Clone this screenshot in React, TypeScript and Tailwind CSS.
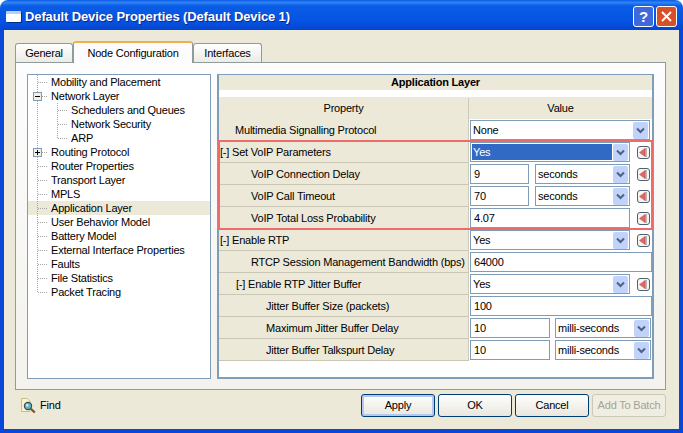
import React from "react";

const FONT = "font-['Liberation_Sans','Noto_Sans',sans-serif]";

type TreeItem = { label: string; depth: number; box?: "+" | "-"; last?: boolean; selected?: boolean };

const treeItems: TreeItem[] = [
  { label: "Mobility and Placement", depth: 0 },
  { label: "Network Layer", depth: 0, box: "-" },
  { label: "Schedulers and Queues", depth: 1 },
  { label: "Network Security", depth: 1 },
  { label: "ARP", depth: 1, last: true },
  { label: "Routing Protocol", depth: 0, box: "+" },
  { label: "Router Properties", depth: 0 },
  { label: "Transport Layer", depth: 0 },
  { label: "MPLS", depth: 0 },
  { label: "Application Layer", depth: 0, selected: true },
  { label: "User Behavior Model", depth: 0 },
  { label: "Battery Model", depth: 0 },
  { label: "External Interface Properties", depth: 0 },
  { label: "Faults", depth: 0 },
  { label: "File Statistics", depth: 0 },
  { label: "Packet Tracing", depth: 0, last: true },
];

const TreeRow = ({ item }: { item: TreeItem }) => (
  <div className={`flex h-[14px] items-center ${item.selected ? "bg-[#ece9d8]" : ""}`}>
    <svg width={item.depth ? 43 : 23} height="14" className="shrink-0">
      <g stroke="#a5a5a5" strokeDasharray="1 1" fill="none">
        <line x1="9.5" y1="0" x2="9.5" y2={item.depth === 0 && item.last ? 7 : 14} />
        {item.depth === 0 && <line x1="10" y1="7.5" x2="20" y2="7.5" />}
        {item.depth === 1 && <line x1="29.5" y1="0" x2="29.5" y2={item.last ? 7 : 14} />}
        {item.depth === 1 && <line x1="30" y1="7.5" x2="40" y2="7.5" />}
      </g>
      {item.box && (
        <g>
          <rect x="5.5" y="3.5" width="8" height="8" fill="#f1efe6" stroke="#7f9db9" />
          <line x1="7" y1="7.5" x2="12" y2="7.5" stroke="#000" />
          {item.box === "+" && <line x1="9.5" y1="5" x2="9.5" y2="10" stroke="#000" />}
        </g>
      )}
    </svg>
    <span className="whitespace-nowrap">{item.label}</span>
  </div>
);

const Chevron = () => (
  <span className="flex h-[17px] w-[15px] shrink-0 items-center justify-center rounded-[2px] bg-[#c1d3fb]">
    <svg width="9" height="7" viewBox="0 0 9 7">
      <path d="M1 1.5 L4.5 5 L8 1.5" stroke="#4d6185" strokeWidth="2" fill="none" />
    </svg>
  </span>
);

const Select = ({ value, width, active }: { value: string; width: string; active?: boolean }) => (
  <div className={`flex h-5 items-center border border-[#7f9db9] bg-white p-px ${width}`}>
    <span className={`flex h-full flex-1 items-center pl-px ${active ? "bg-[#316ac5] text-white" : ""}`}>{value}</span>
    <span className="ml-px">
      <Chevron />
    </span>
  </div>
);

const Input = ({ value, width }: { value: string; width: string }) => (
  <div className={`flex h-5 items-center border border-[#7f9db9] bg-white pl-[3px] ${width}`}>{value}</div>
);

const ParamButton = () => (
  <span className="ml-[7px] flex h-[13px] w-[13px] shrink-0 items-center justify-center rounded-[3px] border border-[#4f6070] bg-[#f6f5ef]">
    <svg width="9" height="9" viewBox="0 0 9 9">
      <rect x="6" y="0" width="2" height="9" fill="#b9b7ab" />
      <path d="M0.5 4.5 L6 0.5 V8.5 Z" fill="#e0686c" stroke="#b5494d" strokeWidth="0.5" />
    </svg>
  </span>
);

const Row = ({
  label,
  indent,
  children,
}: {
  label: string;
  indent: string;
  children: React.ReactNode;
}) => (
  <div className="flex h-[22px]">
    <div className={`flex w-[250px] items-center border-r border-b border-r-[#cdcab9] border-b-[#c9c6b5] bg-[#ece9d8] pt-px ${indent}`}>
      <span className="whitespace-nowrap">{label}</span>
    </div>
    <div className="flex flex-1 items-center pl-px">{children}</div>
  </div>
);

const FooterButton = ({ label, primary, disabled }: { label: string; primary?: boolean; disabled?: boolean }) => (
  <button
    className={`flex h-[23px] w-[74px] items-center justify-center rounded-[3px] border ${
      disabled
        ? "border-[#cbc8b8] bg-[#f0eee2] text-[#a5a294]"
        : `border-[#003c74] bg-gradient-to-b from-[#fefefd] to-[#e9e7dd] text-black ${primary ? "shadow-[inset_0_0_0_2px_#b4c9ef]" : ""}`
    }`}
  >
    {label}
  </button>
);

const FindIcon = () => (
  <svg width="17" height="17" viewBox="0 0 17 17">
    <path d="M1.5 1.5 H7.5 L10 4 V14.5 H1.5 Z" fill="#fdf3c8" stroke="#c9bd90" />
    <circle cx="8" cy="9" r="3.6" fill="#5fb6c4" stroke="#3c4a5c" strokeWidth="1.2" />
    <circle cx="7.2" cy="8.2" r="1.2" fill="#d7f1f4" />
    <path d="M10.8 11.8 L14.8 15.5" stroke="#8a4a1c" strokeWidth="2.2" />
  </svg>
);

const Tab = ({ label, className }: { label: string; className: string }) => (
  <div className={`flex items-center justify-center rounded-t-[3px] border border-[#919b9c] ${className}`}>{label}</div>
);

export default function App() {
  return (
    <div className={`flex h-[433px] w-[683px] flex-col overflow-hidden rounded-t-[8px] bg-white text-[11px] leading-none tracking-[-0.2px] text-black ${FONT}`}>
      {/* title bar */}
      <div className="flex h-[30px] shrink-0 items-center bg-[linear-gradient(to_bottom,#0a5ae6_0%,#2f84f5_8%,#0a5ce6_20%,#0553e2_70%,#0445d0_100%)] pl-[6px] pr-[6px] pt-[3px]">
        <span className="h-[11px] w-[15px] rounded-[1px] border-t-[3px] border-[#b9d0f5] bg-white shadow-[1px_1px_0_#0a2a8a]" />
        <span className="ml-[4px] flex-1 whitespace-nowrap text-[13px] font-bold tracking-[-0.12px] text-white [text-shadow:1px_1px_0_#0a2a8a]">
          Default Device Properties (Default Device 1)
        </span>
        <span className="flex h-[21px] w-[21px] items-center justify-center rounded-[3px] border border-white bg-[#3e68dc] text-[15px] font-bold text-white">?</span>
        <span className="ml-[2px] flex h-[21px] w-[21px] items-center justify-center rounded-[3px] border border-white bg-[#d8502a]">
          <svg width="11" height="11" viewBox="0 0 11 11">
            <path d="M1 1 L10 10 M10 1 L1 10" stroke="#fff" strokeWidth="2" />
          </svg>
        </span>
      </div>

      {/* window body */}
      <div className="flex flex-1 flex-col border-x-[4px] border-b-[4px] border-[#0a46d8] bg-[#ece9d8] pl-[11px] pr-[13px] pt-[10px]">
        <div className="flex h-[22px] items-end">
          <Tab label="General" className="h-[19px] w-[58px] border-b-0 bg-gradient-to-b from-white to-[#ecebe4]" />
          <Tab
            label="Node Configuration"
            className="z-10 -mb-px h-[22px] w-[120px] border-b-0 border-t-[2px] border-t-[#f0b04a] bg-[#fcfcfe]"
          />
          <Tab label="Interfaces" className="h-[19px] w-[69px] border-b-0 bg-gradient-to-b from-white to-[#ecebe4]" />
        </div>

        {/* tab panel */}
        <div className="flex h-[328px] gap-[6px] border border-[#919b9c] bg-gradient-to-b from-[#fdfdfe] to-[#f3f2ec] pl-[11px] pt-[11px]">
          {/* tree */}
          <div className="h-[305px] w-[184px] shrink-0 border border-[#7f9db9] bg-white">
            {treeItems.map((item) => (
              <TreeRow key={item.label} item={item} />
            ))}
          </div>

          {/* property table */}
          <div className="h-[305px] w-[437px] shrink-0 border-x-2 border-b-2 border-t border-[#7f9db9] bg-white">
            <div className="flex h-[15px] items-center justify-center bg-[#ece9d8] font-bold">Application Layer</div>
            <div className="mt-[7px] flex h-[22px] bg-[#ece9d8] pt-px">
              <div className="flex w-[250px] items-center justify-center border-r border-[#cdcab9]">Property</div>
              <div className="flex flex-1 items-center justify-center">Value</div>
            </div>

            <Row label="Multimedia Signalling Protocol" indent="pl-4">
              <Select value="None" width="w-[180px]" />
            </Row>

            <div className="outline-2 -outline-offset-1 outline-[#ec6b6b]">
              <Row label="[-] Set VoIP Parameters" indent="pl-px">
                <Select value="Yes" width="w-[160px]" active />
                <ParamButton />
              </Row>
              <Row label="VoIP Connection Delay" indent="pl-8">
                <Input value="9" width="w-[59px]" />
                <span className="w-[6px]" />
                <Select value="seconds" width="w-[95px]" />
                <ParamButton />
              </Row>
              <Row label="VoIP Call Timeout" indent="pl-8">
                <Input value="70" width="w-[59px]" />
                <span className="w-[6px]" />
                <Select value="seconds" width="w-[95px]" />
                <ParamButton />
              </Row>
              <Row label="VoIP Total Loss Probability" indent="pl-8">
                <Input value="4.07" width="w-[160px]" />
                <ParamButton />
              </Row>
            </div>

            <Row label="[-] Enable RTP" indent="pl-px">
              <Select value="Yes" width="w-[160px]" />
              <ParamButton />
            </Row>
            <Row label="RTCP Session Management Bandwidth (bps)" indent="pl-8">
              <Input value="64000" width="w-[182px]" />
            </Row>
            <Row label="[-] Enable RTP Jitter Buffer" indent="pl-[17px]">
              <Select value="Yes" width="w-[160px]" />
              <ParamButton />
            </Row>
            <Row label="Jitter Buffer Size (packets)" indent="pl-[47px]">
              <Input value="100" width="w-[182px]" />
            </Row>
            <Row label="Maximum Jitter Buffer Delay" indent="pl-[47px]">
              <Input value="10" width="w-[80px]" />
              <span className="w-[5px]" />
              <Select value="milli-seconds" width="w-[96px]" />
            </Row>
            <Row label="Jitter Buffer Talkspurt Delay" indent="pl-[47px]">
              <Input value="10" width="w-[80px]" />
              <span className="w-[5px]" />
              <Select value="milli-seconds" width="w-[96px]" />
            </Row>
          </div>
        </div>

        {/* footer */}
        <div className="mt-[4px] flex h-[23px] items-center">
          <span className="ml-[5px]">
            <FindIcon />
          </span>
          <span className="ml-[3px]">Find</span>
          <div className="ml-auto flex gap-[3px]">
            <FooterButton label="Apply" primary />
            <FooterButton label="OK" />
            <FooterButton label="Cancel" />
            <FooterButton label="Add To Batch" disabled />
          </div>
        </div>
      </div>
    </div>
  );
}
